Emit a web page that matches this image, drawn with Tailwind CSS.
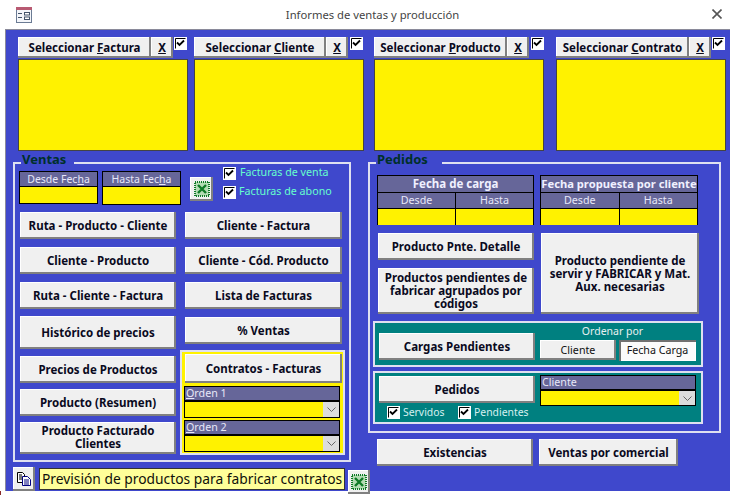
<!DOCTYPE html>
<html lang="es">
<head>
<meta charset="UTF-8">
<title>Informes de ventas y producción</title>
<script src="https://cdn.jsdelivr.net/npm/@tailwindcss/browser@4"></script>
</head>
<body class="bg-white font-['Noto_Sans','DejaVu_Sans',sans-serif] overflow-hidden">
<div class="relative w-[730px] h-[495px] overflow-hidden bg-white">
  <!-- barra de titulo -->
  <div class="relative h-[29px] flex items-center justify-center">
    <svg class="absolute left-[16px] top-[7px]" width="16" height="16" viewBox="0 0 16 16"><rect x="0.5" y="0.5" width="15" height="15" fill="#f4f6fa" stroke="#6b7b94"/><rect x="0" y="0" width="16" height="3" fill="#b85a72"/><path d="M2 6.5h4M2 10.5h4" stroke="#44546a"/><rect x="8.5" y="5.5" width="5" height="2.5" fill="#fff" stroke="#44546a"/><rect x="8.5" y="10" width="5" height="2.5" fill="#fff" stroke="#44546a"/></svg>
    <span class="text-[11.25px] text-[#444] ml-[15px] mt-[2px]">Informes de ventas y producción</span>
    <svg class="absolute left-[712px] top-[9px]" width="10" height="10" viewBox="0 0 10 10"><path d="M0.5 0.5l9 9M9.5 0.5l-9 9" stroke="#555" stroke-width="1.6"/></svg>
  </div>

  <div class="ml-[5px] h-[462px] bg-[#3f48cc] border-t border-l border-[#8a8a9a]">
    <!-- selectores -->
    <div class="flex pt-[7px] pl-[12px]">
      <div class="w-[170px]">
        <div class="flex">
          <button class="w-[133px] h-[21px] bg-[#f0f0f0] shadow-[inset_-2px_-2px_0_#808080,inset_1px_1px_0_#fff] text-[11.5px] font-bold text-[#0a0a1e]">Seleccionar <span class="underline">F</span>actura</button>
          <button class="w-[22px] h-[21px] bg-[#f0f0f0] shadow-[inset_-2px_-2px_0_#808080,inset_1px_1px_0_#fff] text-[11.5px] font-bold text-[#0a0a1e] underline">X</button>
          <svg class="ml-[1px]" width="13" height="13" viewBox="0 0 13 13"><rect width="13" height="13" fill="#fff"/><path d="M1.5 11.5v-10h10" fill="none" stroke="#000"/><path d="M3 5.5l2.5 2.5 4.5-4.5" fill="none" stroke="#000" stroke-width="1.8"/></svg>
        </div>
        <div class="mt-[1px] h-[92px] bg-[#fff200] border border-[#444]"></div>
      </div>
      <div class="w-[170px] ml-[6px]">
        <div class="flex">
          <button class="w-[132px] h-[21px] bg-[#f0f0f0] shadow-[inset_-2px_-2px_0_#808080,inset_1px_1px_0_#fff] text-[11.5px] font-bold text-[#0a0a1e]">Seleccionar <span class="underline">C</span>liente</button>
          <button class="w-[22px] h-[21px] bg-[#f0f0f0] shadow-[inset_-2px_-2px_0_#808080,inset_1px_1px_0_#fff] text-[11.5px] font-bold text-[#0a0a1e] underline">X</button>
          <svg class="ml-[2px]" width="13" height="13" viewBox="0 0 13 13"><rect width="13" height="13" fill="#fff"/><path d="M1.5 11.5v-10h10" fill="none" stroke="#000"/><path d="M3 5.5l2.5 2.5 4.5-4.5" fill="none" stroke="#000" stroke-width="1.8"/></svg>
        </div>
        <div class="mt-[1px] h-[92px] bg-[#fff200] border border-[#444]"></div>
      </div>
      <div class="w-[170px] ml-[10px]">
        <div class="flex">
          <button class="w-[133px] h-[21px] bg-[#f0f0f0] shadow-[inset_-2px_-2px_0_#808080,inset_1px_1px_0_#fff] text-[11.5px] font-bold text-[#0a0a1e]">Seleccionar <span class="underline">P</span>roducto</button>
          <button class="w-[22px] h-[21px] bg-[#f0f0f0] shadow-[inset_-2px_-2px_0_#808080,inset_1px_1px_0_#fff] text-[11.5px] font-bold text-[#0a0a1e] underline">X</button>
          <svg class="ml-[2px]" width="13" height="13" viewBox="0 0 13 13"><rect width="13" height="13" fill="#fff"/><path d="M1.5 11.5v-10h10" fill="none" stroke="#000"/><path d="M3 5.5l2.5 2.5 4.5-4.5" fill="none" stroke="#000" stroke-width="1.8"/></svg>
        </div>
        <div class="mt-[1px] h-[92px] bg-[#fff200] border border-[#444]"></div>
      </div>
      <div class="w-[170px] ml-[12px]">
        <div class="flex">
          <button class="w-[133px] h-[21px] bg-[#f0f0f0] shadow-[inset_-2px_-2px_0_#808080,inset_1px_1px_0_#fff] text-[11.5px] font-bold text-[#0a0a1e]">Seleccionar <span class="underline">C</span>ontrato</button>
          <button class="w-[22px] h-[21px] bg-[#f0f0f0] shadow-[inset_-2px_-2px_0_#808080,inset_1px_1px_0_#fff] text-[11.5px] font-bold text-[#0a0a1e] underline">X</button>
          <svg class="ml-[1px]" width="13" height="13" viewBox="0 0 13 13"><rect width="13" height="13" fill="#fff"/><path d="M1.5 11.5v-10h10" fill="none" stroke="#000"/><path d="M3 5.5l2.5 2.5 4.5-4.5" fill="none" stroke="#000" stroke-width="1.8"/></svg>
        </div>
        <div class="mt-[1px] h-[92px] bg-[#fff200] border border-[#444]"></div>
      </div>
    </div>

    <div class="flex mt-[11px] pl-[7px]">
      <!-- columna izquierda -->
      <div class="w-[338px]">
        <div class="relative w-[338px] h-[300px] border-2 border-[#dfe0f0]">
          <span class="absolute left-[6px] -top-[12px] pl-[1px] pr-[8px] h-[14px] bg-[#3f48cc] text-[13px] leading-[15px] font-bold text-[#00302a]">Ventas</span>
          <div class="flex pl-[4px] pt-[7px] h-[48px]">
            <div class="w-[79px] h-[33px] border border-black">
              <div class="h-[15px] bg-[#666699] border-b border-black text-[10.5px] leading-[14px] text-[#e8e8f8] text-center">Desde Fec<span class="underline">h</span>a</div>
              <div class="h-[16px] bg-[#fff200]"></div>
            </div>
            <div class="w-[79px] h-[34px] border border-black ml-[4px]">
              <div class="h-[15px] bg-[#666699] border-b border-black text-[10.5px] leading-[14px] text-[#e8e8f8] text-center">Hasta Fec<span class="underline">h</span>a</div>
              <div class="h-[17px] bg-[#fff200]"></div>
            </div>
            <button class="w-[23px] h-[24px] ml-[9px] mt-[6px] flex items-center justify-center bg-[#f0f0f0] shadow-[inset_-2px_-2px_0_#808080,inset_1px_1px_0_#fff]">
              <svg width="16" height="16" viewBox="0 0 16 16"><rect x="1" y="1" width="14" height="14" fill="#b4dcb4" stroke="#0e7a26" stroke-width="2" stroke-dasharray="1 1"/><path d="M4 4l8 8M12 4l-8 8" stroke="#0e7a26" stroke-width="2.4"/></svg>
            </button>
            <div class="ml-[10px] -mt-[4px] flex flex-col gap-[6px]">
              <div class="flex items-center h-[13px]">
                <svg width="13" height="13" viewBox="0 0 13 13"><rect width="13" height="13" fill="#fff"/><path d="M1.5 11.5v-10h10" fill="none" stroke="#000"/><path d="M3 5.5l2.5 2.5 4.5-4.5" fill="none" stroke="#000" stroke-width="1.8"/></svg>
                <span class="ml-[4px] -mt-[2px] text-[10.7px] text-[#66ffcc]">Facturas de venta</span>
              </div>
              <div class="flex items-center h-[13px]">
                <svg width="13" height="13" viewBox="0 0 13 13"><rect width="13" height="13" fill="#fff"/><path d="M1.5 11.5v-10h10" fill="none" stroke="#000"/><path d="M3 5.5l2.5 2.5 4.5-4.5" fill="none" stroke="#000" stroke-width="1.8"/></svg>
                <span class="ml-[3px] -mt-[2px] text-[10.7px] text-[#66ffcc]">Facturas de abono</span>
              </div>
            </div>
          </div>
          <div class="flex pl-[5px] gap-[9px]">
            <div class="w-[156px] flex flex-col">
              <button class="h-[27px] bg-[#f0f0f0] shadow-[inset_-2px_-2px_0_#808080,inset_1px_1px_0_#fff] text-[11.5px] font-bold text-[#0a0a1e]">Ruta - Producto - Cliente</button>
              <button class="h-[27px] mt-[8px] bg-[#f0f0f0] shadow-[inset_-2px_-2px_0_#808080,inset_1px_1px_0_#fff] text-[11.5px] font-bold text-[#0a0a1e]">Cliente - Producto</button>
              <button class="h-[27px] mt-[8px] bg-[#f0f0f0] shadow-[inset_-2px_-2px_0_#808080,inset_1px_1px_0_#fff] text-[11.5px] font-bold text-[#0a0a1e]">Ruta - Cliente - Factura</button>
              <button class="h-[33px] mt-[7px] bg-[#f0f0f0] shadow-[inset_-2px_-2px_0_#808080,inset_1px_1px_0_#fff] text-[11.5px] font-bold text-[#0a0a1e]">Histórico de precios</button>
              <button class="h-[27px] mt-[7px] bg-[#f0f0f0] shadow-[inset_-2px_-2px_0_#808080,inset_1px_1px_0_#fff] text-[11.5px] font-bold text-[#0a0a1e]">Precios de Productos</button>
              <button class="h-[27px] mt-[6px] bg-[#f0f0f0] shadow-[inset_-2px_-2px_0_#808080,inset_1px_1px_0_#fff] text-[11.5px] font-bold text-[#0a0a1e]">Producto (Resumen)</button>
              <button class="h-[32px] mt-[6px] pb-[2px] bg-[#f0f0f0] shadow-[inset_-2px_-2px_0_#808080,inset_1px_1px_0_#fff] text-[11.5px] leading-[13px] font-bold text-[#0a0a1e]">Producto Facturado<br>Clientes</button>
            </div>
            <div class="w-[157px] flex flex-col">
              <button class="h-[27px] bg-[#f0f0f0] shadow-[inset_-2px_-2px_0_#808080,inset_1px_1px_0_#fff] text-[11.5px] font-bold text-[#0a0a1e]">Cliente - Factura</button>
              <button class="h-[27px] mt-[8px] bg-[#f0f0f0] shadow-[inset_-2px_-2px_0_#808080,inset_1px_1px_0_#fff] text-[11.5px] font-bold text-[#0a0a1e]">Cliente - Cód. Producto</button>
              <button class="h-[27px] mt-[8px] bg-[#f0f0f0] shadow-[inset_-2px_-2px_0_#808080,inset_1px_1px_0_#fff] text-[11.5px] font-bold text-[#0a0a1e]">Lista de Facturas</button>
              <button class="h-[27px] mt-[8px] bg-[#f0f0f0] shadow-[inset_-2px_-2px_0_#808080,inset_1px_1px_0_#fff] text-[11.5px] font-bold text-[#0a0a1e]">% Ventas</button>
              <div class="-ml-[5px] mt-[6px] w-[165px] h-[105px] bg-[#fff200] border-2 border-[#dfe0f0] pl-[2px] pt-[2px]">
                <button class="block w-[157px] h-[29px] ml-[1px] bg-[#f0f0f0] shadow-[inset_-2px_-2px_0_#808080,inset_1px_1px_0_#fff] text-[11.5px] font-bold text-[#0a0a1e]">Contratos - Facturas</button>
                <div class="w-[156px] h-[32px] mt-[3px] border border-black">
                  <div class="h-[15px] bg-[#666699] border-b-2 border-black text-[10.7px] leading-[13px] text-[#e8e8f8] pl-[1px]"><span class="underline">O</span>rden 1</div>
                  <div class="relative h-[15px]"><span class="absolute right-0 top-0 w-[16px] h-[15px] bg-[#dcdcdc] flex items-center justify-center"><svg width="9" height="5" viewBox="0 0 9 5"><path d="M0.5 0.5l4 4 4-4" fill="none" stroke="#666"/></svg></span></div>
                </div>
                <div class="w-[156px] h-[32px] mt-[2px] border border-black">
                  <div class="h-[15px] bg-[#666699] border-b-2 border-black text-[10.7px] leading-[13px] text-[#e8e8f8] pl-[1px]"><span class="underline">O</span>rden 2</div>
                  <div class="relative h-[15px]"><span class="absolute right-0 top-0 w-[16px] h-[15px] bg-[#dcdcdc] flex items-center justify-center"><svg width="9" height="5" viewBox="0 0 9 5"><path d="M0.5 0.5l4 4 4-4" fill="none" stroke="#666"/></svg></span></div>
                </div>
              </div>
            </div>
          </div>
        </div>
        <!-- prevision -->
        <div class="flex mt-[5px] items-start">
          <button class="w-[22px] h-[24px] shrink-0 flex items-center justify-center bg-[#f0f0f0] shadow-[inset_-2px_-2px_0_#808080,inset_1px_1px_0_#fff]">
            <svg width="16" height="16" viewBox="0 0 16 16"><path d="M1.5 1.5h5l2 2v2M1.5 1.5v10h5" fill="#fff" stroke="#000"/><path d="M6.5 5.5h5l3 3v6h-8z" fill="#fff" stroke="#000080"/><path d="M8 9h5M8 11h5M8 13h5" stroke="#000080"/><path d="M3 4h3M3 6h3M3 8h3" stroke="#000"/></svg>
          </button>
          <div class="w-[306px] h-[22px] shrink-0 ml-[4px] mt-[1px] bg-[#ffff99] border border-[#333] text-[13.8px] leading-[19px] pl-[2px] whitespace-nowrap text-[#10100a]">Previsión de productos para fabricar contratos</div>
          <button class="w-[22px] h-[24px] ml-[3px] mt-[3px] shrink-0 flex items-center justify-center bg-[#f0f0f0] shadow-[inset_-2px_-2px_0_#808080,inset_1px_1px_0_#fff]">
            <svg width="16" height="16" viewBox="0 0 16 16"><rect x="1" y="1" width="14" height="14" fill="#b4dcb4" stroke="#0e7a26" stroke-width="2" stroke-dasharray="1 1"/><path d="M4 4l8 8M12 4l-8 8" stroke="#0e7a26" stroke-width="2.4"/></svg>
          </button>
        </div>
      </div>

      <!-- columna derecha -->
      <div class="ml-[17px] w-[353px]">
        <div class="relative h-[271px] border-2 border-[#dfe0f0]">
          <span class="absolute left-[6px] -top-[12px] pl-[1px] pr-[14px] h-[14px] bg-[#3f48cc] text-[13px] leading-[15px] font-bold text-[#00302a]">Pedidos</span>
          <div class="flex pl-[7px] pt-[11px] gap-[6px]">
            <div class="w-[157px] h-[50px] border border-black grid grid-cols-2 grid-rows-[16px_15px_16px] gap-px bg-black">
              <div class="col-span-2 bg-[#666699] text-[11.5px] leading-[15px] font-bold text-[#f0f0ff] text-center">Fecha de carga</div>
              <div class="bg-[#666699] text-[10.7px] leading-[14px] text-[#e8e8f8] text-center">Desde</div>
              <div class="bg-[#666699] text-[10.7px] leading-[14px] text-[#e8e8f8] text-center">Hasta</div>
              <div class="bg-[#fff200]"></div>
              <div class="bg-[#fff200]"></div>
            </div>
            <div class="w-[158px] h-[50px] border border-black grid grid-cols-2 grid-rows-[16px_15px_16px] gap-px bg-black">
              <div class="col-span-2 bg-[#666699] text-[11.2px] leading-[15px] font-bold text-[#f0f0ff] text-center whitespace-nowrap">Fecha propuesta por cliente</div>
              <div class="bg-[#666699] text-[10.7px] leading-[14px] text-[#e8e8f8] text-center">Desde</div>
              <div class="bg-[#666699] text-[10.7px] leading-[14px] text-[#e8e8f8] text-center">Hasta</div>
              <div class="bg-[#fff200]"></div>
              <div class="bg-[#fff200]"></div>
            </div>
          </div>
          <div class="flex pl-[8px] mt-[8px] gap-[7px]">
            <div class="w-[156px] flex flex-col gap-[8px]">
              <button class="h-[27px] bg-[#f0f0f0] shadow-[inset_-2px_-2px_0_#808080,inset_1px_1px_0_#fff] text-[11.5px] font-bold text-[#0a0a1e]">Producto Pnte. Detalle</button>
              <button class="h-[46px] pb-[2px] bg-[#f0f0f0] shadow-[inset_-2px_-2px_0_#808080,inset_1px_1px_0_#fff] text-[11.5px] leading-[13px] font-bold text-[#0a0a1e]">Productos pendientes de<br>fabricar agrupados por<br>códigos</button>
            </div>
            <button class="w-[158px] h-[81px] bg-[#f0f0f0] shadow-[inset_-2px_-2px_0_#808080,inset_1px_1px_0_#fff] text-[11.5px] leading-[13px] font-bold text-[#0a0a1e]">Producto pendiente de<br>servir y FABRICAR y Mat.<br>Aux. necesarias</button>
          </div>
          <div class="ml-[3px] mt-[7px] w-[330px] h-[46px] bg-[#008080] border-2 border-[#dfe0f0] flex pl-[4px]">
            <button class="w-[156px] h-[27px] mt-[10px] bg-[#f0f0f0] shadow-[inset_-2px_-2px_0_#808080,inset_1px_1px_0_#fff] text-[11.5px] font-bold text-[#0a0a1e]">Cargas Pendientes</button>
            <div class="ml-[5px] w-[156px]">
              <div class="h-[17px] pr-[11px] text-center text-[10.5px] leading-[16px] text-[#e8f0f0]">Ordenar por</div>
              <div class="flex gap-[3px]">
                <button class="w-[76px] h-[20px] bg-[#f0f0f0] shadow-[inset_-2px_-2px_0_#808080,inset_1px_1px_0_#fff] text-[10.7px] text-[#111]">Cliente</button>
                <button class="w-[77px] h-[21px] bg-[#fbfbfb] shadow-[inset_2px_2px_0_#707070,inset_-1px_-1px_0_#fff] text-[10.7px] text-[#111]">Fecha Carga</button>
              </div>
            </div>
          </div>
          <div class="ml-[3px] mt-[4px] w-[330px] h-[53px] bg-[#008080] border-2 border-[#dfe0f0] flex pl-[4px]">
            <div class="w-[156px]">
              <button class="block w-[156px] h-[27px] mt-[3px] bg-[#f0f0f0] shadow-[inset_-2px_-2px_0_#808080,inset_1px_1px_0_#fff] text-[11.5px] font-bold text-[#0a0a1e]">Pedidos</button>
              <div class="flex items-center h-[13px] mt-[3px] pl-[8px]">
                <svg width="13" height="13" viewBox="0 0 13 13"><rect width="13" height="13" fill="#fff"/><path d="M1.5 11.5v-10h10" fill="none" stroke="#000"/><path d="M3 5.5l2.5 2.5 4.5-4.5" fill="none" stroke="#000" stroke-width="1.8"/></svg>
                <span class="ml-[3px] w-[55px] text-[10.4px] text-[#d8f0f0]">Servidos</span>
                <svg width="13" height="13" viewBox="0 0 13 13"><rect width="13" height="13" fill="#fff"/><path d="M1.5 11.5v-10h10" fill="none" stroke="#000"/><path d="M3 5.5l2.5 2.5 4.5-4.5" fill="none" stroke="#000" stroke-width="1.8"/></svg>
                <span class="ml-[3px] text-[10.4px] text-[#d8f0f0]">Pendientes</span>
              </div>
            </div>
            <div class="ml-[5px] mt-[2px] w-[156px] h-[31px] border border-black">
              <div class="h-[15px] bg-[#666699] border-b-2 border-black text-[10.7px] leading-[13px] text-[#e8e8f8] pl-[1px]">Cliente</div>
              <div class="relative h-[14px] bg-[#fff200]"><span class="absolute right-0 top-0 w-[16px] h-[14px] bg-[#dcdcdc] flex items-center justify-center"><svg width="9" height="5" viewBox="0 0 9 5"><path d="M0.5 0.5l4 4 4-4" fill="none" stroke="#666"/></svg></span></div>
            </div>
          </div>
        </div>
        <div class="flex mt-[6px] ml-[9px] gap-[6px]">
          <button class="w-[156px] h-[27px] bg-[#f0f0f0] shadow-[inset_-2px_-2px_0_#808080,inset_1px_1px_0_#fff] text-[11.5px] font-bold text-[#0a0a1e]">Existencias</button>
          <button class="w-[139px] h-[27px] bg-[#f0f0f0] shadow-[inset_-2px_-2px_0_#808080,inset_1px_1px_0_#fff] text-[11.5px] font-bold text-[#0a0a1e]">Ventas por comercial</button>
        </div>
      </div>
    </div>
  </div>
  <div class="absolute left-0 top-[491px] w-[1px] h-[4px] bg-[#8a2a2a]"></div>
</div>
</body>
</html>
